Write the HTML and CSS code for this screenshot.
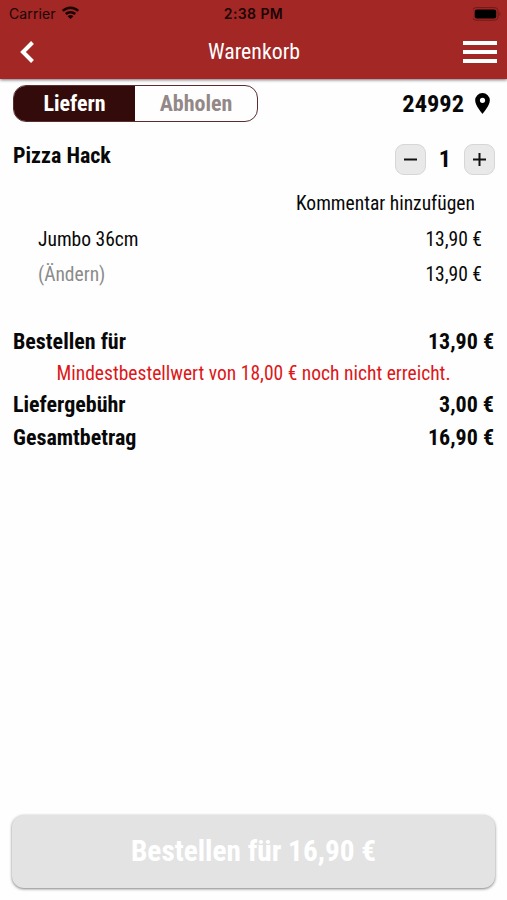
FILE: index.html
```html
<!DOCTYPE html>
<html lang="de">
<head>
<meta charset="utf-8">
<title>Warenkorb</title>
<link rel="stylesheet" href="styles.css">
</head>
<body>
<header class="header">
  <div class="status">
    <div class="carrier"><span>Carrier</span>
      <svg width="19" height="14" viewBox="0 0 20 15"><g fill="none" stroke="#1a0505" stroke-width="2.7"><path d="M1.7 5.3C6.4.8 13.6.8 18.3 5.3"/><path d="M4.900 8.600C7.800 5.900 12.200 5.900 15.100 8.600"/></g><path d="M10 14L6.900 10.900C8.600 9.300 11.400 9.300 13.100 10.900Z" fill="#1a0505"/></svg>
    </div>
    <span class="clock">2:38 PM</span>
    <svg class="battery" width="31" height="14" viewBox="0 0 31 14"><rect x="-.4" y=".6" width="25.500" height="12.600" rx="3.500" fill="none" stroke="#71191a"/><rect x="1.700" y="2.500" width="21.500" height="9" rx="2" fill="#000"/><path d="M26.500 5v4q2-2 0-4" fill="#71191a"/></svg>
  </div>
  <nav class="nav">
    <svg class="back" width="16" height="24" viewBox="0 0 16 24"><path d="M13.500 2.500L4 12L13.500 21.500" fill="none" stroke="#fff" stroke-width="4"/></svg>
    <h1 class="title">Warenkorb</h1>
    <div class="menu"><i></i><i></i><i></i></div>
  </nav>
</header>
<main class="main">
  <section class="delivery">
    <div class="toggle"><b class="on">Liefern</b><b>Abholen</b></div>
    <div class="place"><b>24992</b>
      <svg width="15" height="21" viewBox="0 0 14 20"><path fill-rule="evenodd" d="M7 0a7 7 0 0 0-7 7c0 5.200 7 13 7 13s7-7.800 7-13a7 7 0 0 0-7-7zm0 4.500a2.500 2.500 0 1 1 0 5a2.500 2.500 0 0 1 0-5z"/></svg>
    </div>
  </section>
  <section class="item">
    <b class="name">Pizza Hack</b>
    <div class="stepper">
      <span class="step"><svg width="29" height="29" viewBox="0 0 29 29"><path d="M8 14.500h13" stroke="#111" stroke-width="2"/></svg></span>
      <b>1</b>
      <span class="step"><svg width="29" height="29" viewBox="0 0 29 29"><path d="M8 14.500h13M14.500 8v13" stroke="#111" stroke-width="2"/></svg></span>
    </div>
  </section>
  <div class="comment">Kommentar hinzufügen</div>
  <div class="row"><span>Jumbo 36cm</span><span>13,90 €</span></div>
  <div class="row"><span class="muted">(Ändern)</span><span>13,90 €</span></div>
  <section class="totals">
    <div class="sum"><span>Bestellen für</span><span>13,90 €</span></div>
    <p class="warning">Mindestbestellwert von 18,00 € noch nicht erreicht.</p>
    <div class="sum"><span>Liefergebühr</span><span>3,00 €</span></div>
    <div class="sum"><span>Gesamtbetrag</span><span>16,90 €</span></div>
  </section>
  <button class="order" disabled>Bestellen für 16,90 €</button>
</main>
</body>
</html>
```
FILE: styles.css
```css
* { box-sizing: border-box; }
body {
  margin: 0;
  height: 900px;
  display: flex;
  flex-direction: column;
  overflow: hidden;
  background: #fefefe;
  color: #080808;
  font-family: "Roboto Condensed", Roboto, sans-serif;
  font-stretch: 75%;
  font-size: 19.55px;
}
svg { display: block; }
.header { height: 79px; background: #a22725; box-shadow: 0 1px 3px rgba(0,0,0,.55); }
.status {
  height: 28px;
  padding: 0 9px;
  display: grid;
  grid-template-columns: 1fr auto 1fr;
  align-items: center;
  color: #1a0505;
  font: 14px/28px Inter, sans-serif;
}
.carrier { display: flex; align-items: center; gap: 5px; letter-spacing: .1px; }
.carrier svg { margin-top: -2px; }
.clock { font-weight: 600; letter-spacing: .4px; }
.battery { justify-self: end; margin: -1px -6px 0 0; }
.nav { height: 48px; padding: 0 10px 0 19px; display: grid; grid-template-columns: 1fr auto 1fr; align-items: center; }
.title { margin: 0 8px 2px 0; color: #fff; font-size: 21.8px; font-weight: 400; }
.menu { justify-self: end; display: flex; flex-direction: column; gap: 5px; }
.menu i { width: 34px; height: 4px; background: #fff; }
.main { flex: 1; padding: 6px 12px 12px 13px; display: flex; flex-direction: column; }
.delivery { height: 37px; display: flex; justify-content: space-between; }
.toggle { width: 245px; display: flex; border: 1px solid #5b2d2f; border-radius: 13px; overflow: hidden; line-height: 35px; text-align: center; font-size: 22px; color: #938887; }
.toggle b { flex: 1; }
.toggle .on { flex: 0 0 121px; background: #340b0b; color: #fff; }
.place { display: flex; align-items: center; gap: 11px; margin-right: 5px; font-size: 24.4px; }
.place svg { margin-top: -1px; }
.item { height: 68px; padding-top: 20px; display: flex; justify-content: space-between; align-items: flex-start; }
.name { font-size: 22px; line-height: 28px; }
.stepper { display: flex; align-items: center; gap: 13px; padding-top: 1px; font-size: 24px; line-height: 33px; }
.step { width: 31px; height: 31px; border: 1px solid #d6d6d6; border-radius: 9px; background: #e9e9e9; }
.item { margin-bottom: 0; }
.comment { height: 26px; line-height: 27px; padding-right: 20px; text-align: right; }
.row { height: 35px; line-height: 37px; padding: 0 13px 0 25px; display: flex; justify-content: space-between; }
.comment + .row { margin-top: 5px; }
.muted { color: #8b8b8b; }
.totals { margin-top: 34px; padding-right: 1px; }
.sum { height: 33px; display: flex; justify-content: space-between; font-size: 22px; line-height: 34px; font-weight: 700; }
.warning { margin: 0; height: 29px; line-height: 31px; text-align: center; color: #dc1719; }
.warning ~ .sum { line-height: 35px; }
.order {
  margin: auto 0 0 -1px;
  height: 73px;
  padding: 0 0 2px;
  border: 0;
  border-radius: 12px;
  background: #e3e3e3;
  box-shadow: 0 1px 3px rgba(0,0,0,.5);
  color: #fff;
  font: inherit;
  font-size: 29.3px;
  font-weight: 700;
}
```
